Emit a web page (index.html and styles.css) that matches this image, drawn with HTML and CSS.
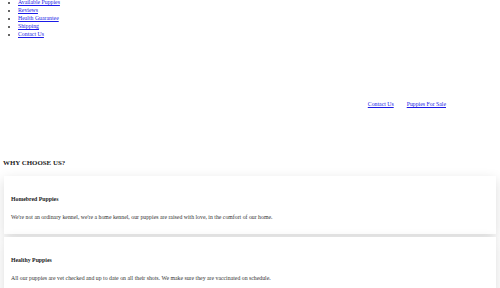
FILE: index.html
```html
<!DOCTYPE html>
<html lang="en">
<head>
    <meta charset="UTF-8">
    <meta name="viewport" content="width=device-width, initial-scale=1.0">
    <title>Puppies</title>
    <link rel="stylesheet" href="styles.css">
</head>
<body>
    <ul class="menu">
        <li><a href="#">Available Puppies</a></li>
        <li><a href="#">Reviews</a></li>
        <li><a href="#">Health Guarantee</a></li>
        <li><a href="#">Shipping</a></li>
        <li><a href="#">Contact Us</a></li>
    </ul>

    <div class="top-links">
        <a href="#">Contact Us</a>
        <a href="#">Puppies For Sale</a>
    </div>

    <section class="why">
        <h2>WHY CHOOSE US?</h2>
        <div class="card">
            <h3>Homebred Puppies</h3>
            <p>We're not an ordinary kennel, we're a home kennel, our puppies are raised with love, in the comfort of our home.</p>
        </div>
        <div class="card">
            <h3>Healthy Puppies</h3>
            <p>All our puppies are vet checked and up to date on all their shots. We make sure they are vaccinated on schedule.</p>
        </div>
    </section>
</body>
</html>
```
FILE: styles.css
```css
* {
    box-sizing: border-box;
}

body {
    margin: 0;
    font-family: "Liberation Serif", serif;
    font-size: 5.8px;
    line-height: 8px;
    color: #333;
    background: #fff;
    overflow: hidden;
}

a {
    color: #1a1ae6;
}

.menu {
    margin: -2px 0 0;
    padding-left: 18px;
}

.top-links {
    display: flex;
    justify-content: flex-end;
    gap: 13px;
    padding: 62px 54px 0 0;
}

.why {
    padding: 51px 4px 0 3px;
}

.why h2 {
    font-size: 6.9px;
    color: #222;
    margin: 0 0 9px;
}

.card {
    background: #fff;
    margin: 0 0 3px 1px;
    padding: 19px 7px 13px;
    box-shadow: 0 4px 12px rgba(0, 0, 0, 0.14);
}

.card h3 {
    font-size: 5.8px;
    color: #222;
    margin: 0 0 10px;
}

.card p {
    margin: 0;
}
```
